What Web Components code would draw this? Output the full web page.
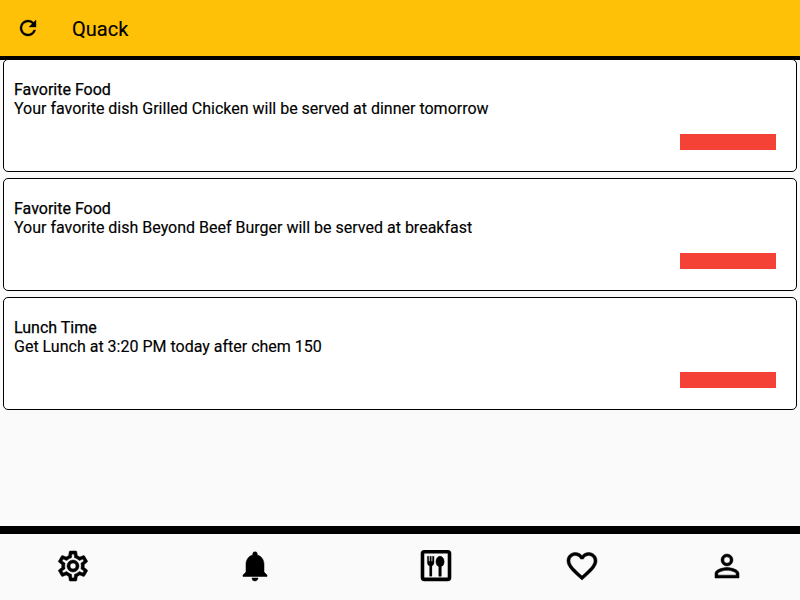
<!DOCTYPE html>
<html lang="en">
<head>
<meta charset="utf-8">
<title>Quack</title>
<style>
html,body{margin:0;height:100%;overflow:hidden}
body{font-family:Roboto,sans-serif;color:#000;background:#fafafa}
</style>
</head>
<body>
<quack-app></quack-app>
<script>
const define = (name, markup) => customElements.define(name, class extends HTMLElement {
  constructor() {
    super();
    this.attachShadow({mode: 'open'}).innerHTML = markup;
  }
});

const icons = {
  refresh: '<path d="M17.65 6.35A7.96 7.96 0 0 0 12 4a8 8 0 1 0 7.73 10h-2.08A6 6 0 1 1 12 6c1.66 0 3.14.69 4.22 1.78L13 11h7V4z"/>',
  settings: '<path d="M19.43 12.98c.04-.32.07-.64.07-.98s-.03-.66-.07-.98l2.11-1.65c.19-.15.24-.42.12-.64l-2-3.46a.5.5 0 0 0-.61-.22l-2.49 1c-.52-.4-1.08-.73-1.69-.98l-.38-2.65A.488.488 0 0 0 14 2h-4c-.25 0-.46.18-.49.42l-.38 2.65c-.61.25-1.17.59-1.69.98l-2.49-1a.5.5 0 0 0-.61.22l-2 3.46c-.13.22-.07.49.12.64l2.11 1.65c-.04.32-.07.65-.07.98s.03.66.07.98l-2.11 1.65c-.19.15-.24.42-.12.64l2 3.46a.5.5 0 0 0 .61.22l2.49-1c.52.4 1.08.73 1.69.98l.38 2.65c.03.24.24.42.49.42h4c.25 0 .46-.18.49-.42l.38-2.65c.61-.25 1.17-.59 1.69-.98l2.49 1a.5.5 0 0 0 .61-.22l2-3.46c.12-.22.07-.49-.12-.64zm-1.98-1.71c.04.31.05.52.05.73s-.02.43-.05.73l-.14 1.13.89.7 1.08.84-.7 1.21-1.27-.51-1.04-.42-.9.68c-.43.32-.84.56-1.25.73l-1.06.43-.16 1.13-.2 1.35h-1.4l-.19-1.35-.16-1.13-1.06-.43c-.43-.18-.83-.41-1.23-.71l-.91-.7-1.06.43-1.27.51-.7-1.21 1.08-.84.89-.7-.14-1.13c-.03-.31-.05-.54-.05-.74s.02-.43.05-.73l.14-1.13-.89-.7-1.08-.84.7-1.21 1.27.51 1.04.42.9-.68c.43-.32.84-.56 1.25-.73l1.06-.43.16-1.13.2-1.35h1.39l.19 1.35.16 1.13 1.06.43c.43.18.83.41 1.23.71l.91.7 1.06-.43 1.27-.51.7 1.21-1.07.85-.89.7zM12 8a4 4 0 1 0 0 8 4 4 0 0 0 0-8zm0 6a2 2 0 1 1 0-4 2 2 0 0 1 0 4z"/>',
  bell: '<path d="M12 22c1.1 0 2-.9 2-2h-4a2 2 0 0 0 2 2zm6-6v-5c0-3.07-1.64-5.64-4.5-6.32V4a1.5 1.5 0 0 0-3 0v.68C7.63 5.36 6 7.92 6 11v5l-2 2v1h16v-1z"/>',
  food: '<rect x="3" y="2.5" width="18" height="18.4" rx="1.2" style="fill:none;stroke-width:2.4"/><path d="M6.2 5.5h1v3.3h.7V5.5h1v3.3h.7V5.5h1.1v4.2c0 1.3-.6 2-1.4 2.3v6.8H7.7V12c-.9-.3-1.5-1-1.5-2.3z" style="stroke-width:.15"/><path d="M14.7 5.5c1.5 0 2.7 1.6 2.7 3.6 0 1.7-.8 2.9-1.9 3.3v6.4h-1.6v-6.4c-1.1-.4-1.9-1.6-1.9-3.3 0-2 1.2-3.6 2.7-3.6z"/>',
  heart: '<path d="M16.5 3c-1.74 0-3.41.81-4.5 2.09C10.91 3.81 9.24 3 7.5 3 4.42 3 2 5.42 2 8.5c0 3.78 3.4 6.86 8.55 11.54L12 21.35l1.45-1.32C18.6 15.36 22 12.28 22 8.5 22 5.42 19.58 3 16.5 3zm-4.4 15.55-.1.1-.1-.1C7.14 14.24 4 11.39 4 8.5 4 6.5 5.5 5 7.5 5c1.54 0 3.04.99 3.57 2.36h1.87C13.46 5.99 14.96 5 16.5 5c2 0 3.5 1.5 3.5 3.5 0 2.89-3.14 5.74-7.9 10.05z"/>',
  person: '<path d="M12 5.9a2.1 2.1 0 1 1 0 4.2 2.1 2.1 0 0 1 0-4.2m0 9c2.97 0 6.1 1.46 6.1 2.1v1.1H5.9V17c0-.64 3.13-2.1 6.1-2.1M12 4a4 4 0 1 0 0 8 4 4 0 0 0 0-8zm0 9c-2.67 0-8 1.34-8 4v3h16v-3c0-2.66-5.33-4-8-4z"/>'
};

customElements.define('quack-icon', class extends HTMLElement {
  constructor() {
    super();
    this.attachShadow({mode: 'open'});
  }
  connectedCallback() {
    this.shadowRoot.innerHTML = `<style>:host{display:block;width:var(--icon-size,24px);height:var(--icon-size,24px)}svg{display:block;width:100%;height:100%;fill:currentColor;stroke:currentColor;stroke-width:.35}</style><svg viewBox="0 0 24 24">${icons[this.getAttribute('name')]}</svg>`;
  }
});

define('quack-header', `<style>
:host{display:flex;align-items:center;flex:none;height:56px;padding-left:16px;gap:32px;background:#ffc107;border-bottom:4px solid #000}
h1{margin:0;padding-top:2px;font-size:20px;line-height:24px;font-weight:400;-webkit-text-stroke:.15px #000}
</style><quack-icon name="refresh"></quack-icon><h1><slot></slot></h1>`);

define('notice-card', `<style>
:host{display:flex;flex-direction:column;box-sizing:border-box;height:113px;padding:20px 20px 21px 10px;border:1px solid #000;border-radius:5px;background:#fff;font-size:16px;line-height:19px;-webkit-text-stroke:.15px #000}
.title{-webkit-text-stroke-width:.25px}
.bar{align-self:flex-end;margin-top:auto;width:96px;height:16px;background:#f44336}
</style><div class="title"><slot name="title"></slot></div><div><slot></slot></div><div class="bar"></div>`);

define('notice-list', `<style>
:host{display:flex;flex-direction:column;flex:1;gap:6px;padding:3px;margin-top:-4px;position:relative}
</style><slot></slot>`);

define('nav-item', `<style>
:host{display:flex;justify-content:center;flex:1 1 0;--icon-size:36px}
:host([selected]){flex-grow:1.5}
</style><slot></slot>`);

define('bottom-nav', `<style>
:host{display:flex;flex:none;box-sizing:border-box;height:74px;padding-top:14px;border-top:8px solid #000}
</style><slot></slot>`);

define('quack-app', `<style>:host{display:flex;flex-direction:column;height:100vh}</style>
<quack-header>Quack</quack-header>
<notice-list>
<notice-card><span slot="title">Favorite Food</span>Your favorite dish Grilled Chicken will be served at dinner tomorrow</notice-card>
<notice-card><span slot="title">Favorite Food</span>Your favorite dish Beyond Beef Burger will be served at breakfast</notice-card>
<notice-card><span slot="title">Lunch Time</span>Get Lunch at 3:20 PM today after chem 150</notice-card>
</notice-list>
<bottom-nav>
<nav-item><quack-icon name="settings"></quack-icon></nav-item>
<nav-item selected><quack-icon name="bell"></quack-icon></nav-item>
<nav-item><quack-icon name="food"></quack-icon></nav-item>
<nav-item><quack-icon name="heart"></quack-icon></nav-item>
<nav-item><quack-icon name="person"></quack-icon></nav-item>
</bottom-nav>`);
</script>
</body>
</html>
